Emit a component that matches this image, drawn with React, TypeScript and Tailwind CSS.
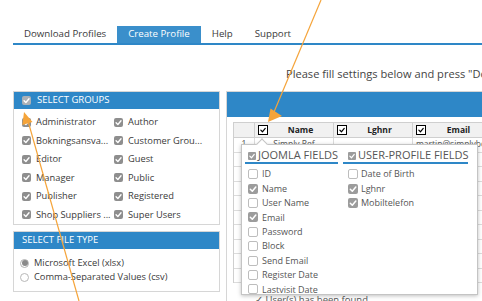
import React from "react";

const groupsLeft = ["Administrator", "Bokningsansva...", "Editor", "Manager", "Publisher", "Shop Suppliers ..."];
const groupsRight = ["Author", "Customer Grou...", "Guest", "Public", "Registered", "Super Users"];

const joomlaFields: [string, boolean][] = [
  ["ID", false],
  ["Name", true],
  ["User Name", false],
  ["Email", true],
  ["Password", false],
  ["Block", false],
  ["Send Email", false],
  ["Register Date", false],
  ["Lastvisit Date", false],
];

const profileFields: [string, boolean][] = [
  ["Date of Birth", false],
  ["Lghnr", true],
  ["Mobiltelefon", true],
];

function Check({ color = "white" }: { color?: string }) {
  return (
    <svg viewBox="0 0 10 10" className="block h-full w-full" fill="none">
      <path d="M2.3 5.2 L4.3 7.2 L7.8 3" stroke={color} strokeWidth="1.5" strokeLinecap="round" strokeLinejoin="round" />
    </svg>
  );
}

function GrayBox() {
  return (
    <span className="block h-[9px] w-[9px] shrink-0 rounded-[2px] bg-[#8e8e8e]">
      <Check />
    </span>
  );
}

function FieldBox({ checked }: { checked: boolean }) {
  return checked ? (
    <span className="block h-[10px] w-[10px] shrink-0 rounded-[2px] bg-[#9c9c9c]">
      <Check />
    </span>
  ) : (
    <span className="block h-[10px] w-[10px] shrink-0 rounded-[2px] border border-[#bdbdbd] bg-white" />
  );
}

function HeadBox() {
  return (
    <span className="block h-[10px] w-[10px] shrink-0 border-[1.5px] border-black bg-white">
      <Check color="black" />
    </span>
  );
}

export default function App() {
  return (
    <div className="relative h-[301px] w-[482px] overflow-hidden bg-white font-['Open_Sans',sans-serif] text-[#3a3a3a]">
      {/* tabs */}
      <div className="pl-[13px] pt-[26px]">
        <div className="flex h-[19px] border-b-2 border-[#2e87c7] text-[9.7px]">
          <div className="flex items-center px-[11px]">Download Profiles</div>
          <div className="flex items-center bg-[#3a8fcb] px-[11px] text-white">Create Profile</div>
          <div className="flex items-center px-[11px]">Help</div>
          <div className="flex items-center px-[11px]">Support</div>
        </div>
      </div>

      <div className="h-[46px] whitespace-nowrap pl-[286px] pt-[21px] text-[11.1px] leading-[16px] text-[#444]">
        Please fill settings below and press "Download Profiles" to continue.
      </div>

      <div className="flex gap-[6px] pl-[13px]">
        {/* left column */}
        <div className="flex w-[207px] shrink-0 flex-col gap-[6px]">
          <section className="border border-[#d6d6d6]">
            <div className="flex h-[17px] items-center gap-[6px] bg-[#2e87c7] pl-[8px] text-[9.5px] text-white">
              <span className="block h-[9px] w-[9px] rounded-[2px] bg-[#aab0b6]">
                <Check />
              </span>
              SELECT GROUPS
            </div>
            <div className="flex pl-[8px] pt-[4px] text-[9.3px]">
              <div className="w-[92px]">
                {groupsLeft.map((g) => (
                  <div key={g} className="flex h-[18.5px] items-center gap-[5px] whitespace-nowrap">
                    <GrayBox />
                    {g}
                  </div>
                ))}
              </div>
              <div>
                {groupsRight.map((g) => (
                  <div key={g} className="flex h-[18.5px] items-center gap-[5px] whitespace-nowrap">
                    <GrayBox />
                    {g}
                  </div>
                ))}
              </div>
            </div>
          </section>

          <section className="border border-[#d6d6d6]">
            <div className="flex h-[17px] items-center bg-[#2e87c7] pl-[8px] text-[9.5px] text-white">SELECT FILE TYPE</div>
            <div className="py-[7px] pl-[6px] text-[9.3px]">
              <div className="flex h-[14px] items-center gap-[5px]">
                <span className="flex h-[9px] w-[9px] items-center justify-center rounded-full border border-[#b0b0b0] bg-white">
                  <span className="block h-[6px] w-[6px] rounded-full bg-[#8a8a8a]" />
                </span>
                Microsoft Excel (xlsx)
              </div>
              <div className="flex h-[14px] items-center gap-[5px]">
                <span className="block h-[9px] w-[9px] rounded-full border border-[#b8b8b8] bg-white" />
                Comma-Separated Values (csv)
              </div>
            </div>
          </section>
        </div>

        {/* right panel */}
        <section className="w-[270px] shrink-0 border border-[#d6d6d6]">
          <div className="h-[25px] bg-[#2e87c7]" />
          <div className="pl-[6px] pt-[5px] text-[8.5px]">
            <div className="border-l border-t border-[#cfcfcf]">
              <div className="grid h-[15px] grid-cols-[21px_79px_79px_79px] bg-[#f1f1f1] font-bold text-[#222]">
                <div className="border-b border-r border-[#cfcfcf]" />
                <div className="flex items-center border-b border-r border-[#cfcfcf] pl-[3px]">
                  <HeadBox />
                  <span className="flex-1 text-center">Name</span>
                </div>
                <div className="flex items-center border-b border-r border-[#cfcfcf] pl-[3px]">
                  <HeadBox />
                  <span className="flex-1 text-center">Lghnr</span>
                </div>
                <div className="flex items-center border-b border-r border-[#cfcfcf] pl-[3px]">
                  <HeadBox />
                  <span className="flex-1 text-center">Email</span>
                </div>
              </div>
              {Array.from({ length: 10 }).map((_, i) => (
                <div key={i} className="grid h-[14.5px] grid-cols-[21px_79px_79px_79px] text-[#555]">
                  <div className="flex items-center justify-center border-b border-r border-[#dcdcdc]">{i === 0 ? "1" : ""}</div>
                  <div className="flex items-center justify-center border-b border-r border-[#dcdcdc]">{i === 0 ? "Simply Ref" : ""}</div>
                  <div className="border-b border-r border-[#dcdcdc]" />
                  <div className="flex items-center whitespace-nowrap border-b border-r border-[#dcdcdc] pl-[3px]">
                    {i === 0 ? "martin@simplybokning.se" : ""}
                  </div>
                </div>
              ))}
            </div>
            <div className="pl-[22px] pt-[10px] text-[9.5px] leading-[14px] text-[#555]">✓ User(s) has been found.</div>
          </div>
        </section>
      </div>

      {/* field chooser popover */}
      <div className="absolute left-[241px] top-[144px] h-[151px] w-[237px] border border-[#c4c4c4] bg-white shadow-[0_1px_4px_rgba(0,0,0,0.25)]">
        <span className="absolute left-[16px] top-[-5px] block h-[8px] w-[8px] rotate-45 border-l border-t border-[#c4c4c4] bg-white" />
        <div className="flex gap-[5px] pl-[3px] pt-[4px] text-[#555]">
          <div className="w-[93px]">
            <div className="flex h-[15px] items-center gap-[2px] whitespace-nowrap border-b-2 border-[#2e87c7] pl-[3px] text-[11px]">
              <span className="block h-[8px] w-[8px] shrink-0 rounded-[1px] bg-[#9c9c9c]">
                <Check />
              </span>
              JOOMLA FIELDS
            </div>
            <div className="pl-[3px] pt-[3px] text-[9px]">
              {joomlaFields.map(([f, c]) => (
                <div key={f} className="flex h-[14.4px] items-center gap-[4px] whitespace-nowrap">
                  <FieldBox checked={c} />
                  {f}
                </div>
              ))}
            </div>
          </div>
          <div className="w-[125px]">
            <div className="flex h-[15px] items-center gap-[2px] whitespace-nowrap border-b-2 border-[#2e87c7] pl-[5px] text-[11px]">
              <span className="block h-[8px] w-[8px] shrink-0 rounded-[1px] bg-[#9c9c9c]">
                <Check />
              </span>
              USER-PROFILE FIELDS
            </div>
            <div className="pl-[5px] pt-[3px] text-[9px]">
              {profileFields.map(([f, c]) => (
                <div key={f} className="flex h-[14.4px] items-center gap-[3px] whitespace-nowrap">
                  <FieldBox checked={c} />
                  {f}
                </div>
              ))}
            </div>
          </div>
        </div>
      </div>

      {/* annotation arrows */}
      <svg className="pointer-events-none absolute left-0 top-0" width="482" height="301" viewBox="0 0 482 301">
        <line x1="321" y1="0" x2="274" y2="112" stroke="#f5a43a" strokeWidth="1.2" />
        <polygon points="268,122 270.5,108.5 282,116" fill="#f5a43a" />
        <line x1="79" y1="301" x2="28" y2="121" stroke="#f5a43a" strokeWidth="1.2" />
        <polygon points="24,112 22.3,125 32.5,122" fill="#f5a43a" />
      </svg>
    </div>
  );
}
